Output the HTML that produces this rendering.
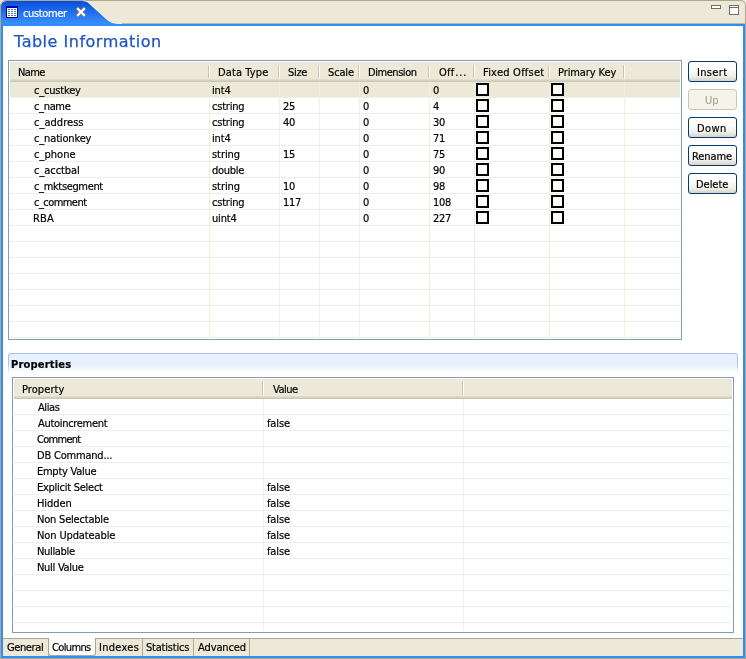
<!DOCTYPE html>
<html><head><meta charset="utf-8">
<style>
html,body{margin:0;padding:0;}
body{width:746px;height:659px;overflow:hidden;background:#ece9d8;font-family:"DejaVu Sans Condensed","Liberation Sans",sans-serif;font-size:11px;color:#000;position:relative;}
div,span{position:absolute;white-space:nowrap;box-sizing:border-box;}
#frame{left:1px;top:24px;width:744px;height:634px;border:2px solid #2f8cfd;background:#fff;}
#title{font-family:"DejaVu Sans","Liberation Sans",sans-serif;font-size:16px;line-height:20px;color:#1e56c3;-webkit-text-stroke:0.25px #1e56c3;}
.tb{border:1px solid #7f9db9;background:#fff;}
.hd{height:20px;background:linear-gradient(#ece9d8 0,#ece9d8 17px,#e2decd 17px,#e2decd 18px,#d6d2c2 18px,#d6d2c2 19px,#cbc7b8 19px,#cbc7b8 20px);}
.hs{width:2px;height:13px;border-left:1px solid #c7c5b2;border-right:1px solid #fff;}
.t{line-height:13px;height:13px;}
span{will-change:transform;-webkit-text-stroke:0.2px;}
.hl{height:1px;background:#f1efe2;}
.vl{width:1px;background:#f1efe2;}
.cb{width:13px;height:13px;border:2px solid #000;background:#fff;}
.btn{left:688px;width:49px;height:21px;border:1px solid #003c74;border-radius:3px;background:linear-gradient(#fff 0,#fcfcfa 40%,#f0efe8 75%,#d8d2c6 100%);}
.btn.dis{border-color:#c9c7ba;background:#f5f4ea;}
.dis span{color:#aca899;}
</style></head><body>
<svg style="position:absolute;left:0;top:0" width="746" height="659" viewBox="0 0 746 659">
<defs><linearGradient id="tg" x1="0" y1="0" x2="0" y2="1"><stop offset="0" stop-color="#084edc"/><stop offset="0.5" stop-color="#2272f2"/><stop offset="1" stop-color="#3d94ff"/></linearGradient></defs>
<path d="M0.5 659 V6 Q0.5 0.5 6 0.5 H740 Q745.5 0.5 745.5 6 V659" fill="#ece9d8" stroke="#b0a78e"/>
<path d="M0 658.5H746" stroke="#b0a78e"/>
<path d="M1 26 V7 Q1 1 7 1 H82 C87 1 88.5 3 91 5.5 L106.5 19.5 C110 22.5 114 24 121 24 H745 V26 Z" fill="url(#tg)"/>
<path d="M83 0.8 C88 0.8 89.5 2.8 92 5.3 L107.5 19.3 C111 22.3 115 23.5 122 23.5 H743" fill="none" stroke="#f6f4ea" stroke-width="1" opacity="0.7"/>
<path d="M122 23.5H745" stroke="#c4b898"/>
<rect x="6" y="6" width="12" height="12" fill="#000080"/>
<rect x="7" y="6" width="10" height="2" fill="#0000c8"/>
<rect x="7" y="8" width="10" height="9" fill="#fff"/>
<rect x="8" y="9" width="2" height="1" fill="#4878a8"/><rect x="11" y="9" width="2" height="1" fill="#4878a8"/><rect x="14" y="9" width="2" height="1" fill="#4878a8"/><rect x="8" y="11" width="2" height="1" fill="#4878a8"/><rect x="11" y="11" width="2" height="1" fill="#4878a8"/><rect x="14" y="11" width="2" height="1" fill="#4878a8"/><rect x="8" y="13" width="2" height="1" fill="#4878a8"/><rect x="11" y="13" width="2" height="1" fill="#4878a8"/><rect x="14" y="13" width="2" height="1" fill="#4878a8"/><rect x="8" y="15" width="2" height="1" fill="#4878a8"/><rect x="11" y="15" width="2" height="1" fill="#4878a8"/><rect x="14" y="15" width="2" height="1" fill="#4878a8"/>
<path d="M78 9 L84 15 M84 9 L78 15" stroke="#8a8268" stroke-width="3.4" stroke-linecap="square"/>
<path d="M78 9 L84 15 M84 9 L78 15" stroke="#fff" stroke-width="2" stroke-linecap="square"/>
<rect x="711.5" y="5.5" width="9" height="3" fill="#fff" stroke="#716f64"/>
<rect x="729.5" y="5.5" width="9" height="9" fill="#fff" stroke="#716f64"/>
<path d="M730 7.5H738" stroke="#716f64"/>
</svg>
<div id="frame"></div>

<span class="t" style="left:23.0px;top:7px;letter-spacing:-0.35px;color:#fff;">customer</span>
<span class="" style="left:13.5px;top:32px;letter-spacing:0.51px;" id="title">Table Information</span>
<div class="tb" style="left:8px;top:60px;width:674px;height:280px"></div>
<div class="hd" style="left:10px;top:62px;width:670px"></div>
<div style="left:10px;top:82px;width:670px;height:15px;background:#ece9d8"></div>
<div class="hl" style="left:10px;top:97px;width:670px"></div>
<div class="hl" style="left:10px;top:113px;width:670px"></div>
<div class="hl" style="left:10px;top:129px;width:670px"></div>
<div class="hl" style="left:10px;top:145px;width:670px"></div>
<div class="hl" style="left:10px;top:161px;width:670px"></div>
<div class="hl" style="left:10px;top:177px;width:670px"></div>
<div class="hl" style="left:10px;top:193px;width:670px"></div>
<div class="hl" style="left:10px;top:209px;width:670px"></div>
<div class="hl" style="left:10px;top:225px;width:670px"></div>
<div class="hl" style="left:10px;top:241px;width:670px"></div>
<div class="hl" style="left:10px;top:257px;width:670px"></div>
<div class="hl" style="left:10px;top:273px;width:670px"></div>
<div class="hl" style="left:10px;top:289px;width:670px"></div>
<div class="hl" style="left:10px;top:305px;width:670px"></div>
<div class="hl" style="left:10px;top:321px;width:670px"></div>
<div class="hl" style="left:10px;top:337px;width:670px"></div>
<div class="vl" style="left:209px;top:82px;height:256px"></div>
<div class="hs" style="left:208px;top:65px"></div>
<div class="vl" style="left:279px;top:82px;height:256px"></div>
<div class="hs" style="left:278px;top:65px"></div>
<div class="vl" style="left:319px;top:82px;height:256px"></div>
<div class="hs" style="left:318px;top:65px"></div>
<div class="vl" style="left:359px;top:82px;height:256px"></div>
<div class="hs" style="left:358px;top:65px"></div>
<div class="vl" style="left:429px;top:82px;height:256px"></div>
<div class="hs" style="left:428px;top:65px"></div>
<div class="vl" style="left:474px;top:82px;height:256px"></div>
<div class="hs" style="left:473px;top:65px"></div>
<div class="vl" style="left:549px;top:82px;height:256px"></div>
<div class="hs" style="left:548px;top:65px"></div>
<div class="vl" style="left:624px;top:82px;height:256px"></div>
<div class="hs" style="left:623px;top:65px"></div>
<span class="t" style="left:18.0px;top:66px;letter-spacing:-0.6px;">Name</span>
<span class="t" style="left:218.0px;top:66px;letter-spacing:0.12px;">Data Type</span>
<span class="t" style="left:288.0px;top:66px;letter-spacing:-0.3px;">Size</span>
<span class="t" style="left:327.5px;top:66px;letter-spacing:-0.15px;">Scale</span>
<span class="t" style="left:368.0px;top:66px;letter-spacing:-0.45px;">Dimension</span>
<span class="t" style="left:438.5px;top:66px;letter-spacing:0.3px;">Off<i style="font-style:normal;letter-spacing:0.85px;margin-left:0.6px">...</i></span>
<span class="t" style="left:482.5px;top:66px;letter-spacing:0.24px;">Fixed Offset</span>
<span class="t" style="left:557.5px;top:66px;letter-spacing:-0.1px;">Primary Key</span>
<span class="t" style="left:33.5px;top:84px;letter-spacing:-0.19px;">c_custkey</span>
<span class="t" style="left:211.5px;top:84px;letter-spacing:-0.17px;">int4</span>
<span class="t" style="left:363px;top:84px;">0</span>
<span class="t" style="left:433px;top:84px;">0</span>
<div class="cb" style="left:476px;top:83px"></div>
<div class="cb" style="left:551px;top:83px"></div>
<span class="t" style="left:33.5px;top:100px;letter-spacing:-0.34px;">c_name</span>
<span class="t" style="left:211.5px;top:100px;letter-spacing:-0.22px;">cstring</span>
<span class="t" style="left:283px;top:100px;letter-spacing:-0.35px;">25</span>
<span class="t" style="left:363px;top:100px;">0</span>
<span class="t" style="left:433px;top:100px;">4</span>
<div class="cb" style="left:476px;top:99px"></div>
<div class="cb" style="left:551px;top:99px"></div>
<span class="t" style="left:33.5px;top:116px;letter-spacing:0.03px;">c_address</span>
<span class="t" style="left:211.5px;top:116px;letter-spacing:-0.22px;">cstring</span>
<span class="t" style="left:283px;top:116px;letter-spacing:-0.35px;">40</span>
<span class="t" style="left:363px;top:116px;">0</span>
<span class="t" style="left:433px;top:116px;letter-spacing:-0.35px;">30</span>
<div class="cb" style="left:476px;top:115px"></div>
<div class="cb" style="left:551px;top:115px"></div>
<span class="t" style="left:33.5px;top:132px;letter-spacing:-0.15px;">c_nationkey</span>
<span class="t" style="left:211.5px;top:132px;letter-spacing:-0.17px;">int4</span>
<span class="t" style="left:363px;top:132px;">0</span>
<span class="t" style="left:433px;top:132px;letter-spacing:-0.35px;">71</span>
<div class="cb" style="left:476px;top:131px"></div>
<div class="cb" style="left:551px;top:131px"></div>
<span class="t" style="left:33.5px;top:148px;letter-spacing:0.03px;">c_phone</span>
<span class="t" style="left:211.5px;top:148px;letter-spacing:-0.06px;">string</span>
<span class="t" style="left:283px;top:148px;letter-spacing:-0.35px;">15</span>
<span class="t" style="left:363px;top:148px;">0</span>
<span class="t" style="left:433px;top:148px;letter-spacing:-0.35px;">75</span>
<div class="cb" style="left:476px;top:147px"></div>
<div class="cb" style="left:551px;top:147px"></div>
<span class="t" style="left:33.5px;top:164px;letter-spacing:-0.06px;">c_acctbal</span>
<span class="t" style="left:211.5px;top:164px;letter-spacing:-0.27px;">double</span>
<span class="t" style="left:363px;top:164px;">0</span>
<span class="t" style="left:433px;top:164px;letter-spacing:-0.35px;">90</span>
<div class="cb" style="left:476px;top:163px"></div>
<div class="cb" style="left:551px;top:163px"></div>
<span class="t" style="left:33.5px;top:180px;letter-spacing:-0.35px;">c_mktsegment</span>
<span class="t" style="left:211.5px;top:180px;letter-spacing:-0.06px;">string</span>
<span class="t" style="left:283px;top:180px;letter-spacing:-0.35px;">10</span>
<span class="t" style="left:363px;top:180px;">0</span>
<span class="t" style="left:433px;top:180px;letter-spacing:-0.35px;">98</span>
<div class="cb" style="left:476px;top:179px"></div>
<div class="cb" style="left:551px;top:179px"></div>
<span class="t" style="left:33.5px;top:196px;letter-spacing:-0.55px;">c_comment</span>
<span class="t" style="left:211.5px;top:196px;letter-spacing:-0.22px;">cstring</span>
<span class="t" style="left:283px;top:196px;letter-spacing:-0.35px;">117</span>
<span class="t" style="left:363px;top:196px;">0</span>
<span class="t" style="left:433px;top:196px;letter-spacing:-0.35px;">108</span>
<div class="cb" style="left:476px;top:195px"></div>
<div class="cb" style="left:551px;top:195px"></div>
<span class="t" style="left:33.0px;top:212px;letter-spacing:0.15px;">RBA</span>
<span class="t" style="left:211.5px;top:212px;letter-spacing:-0.19px;">uint4</span>
<span class="t" style="left:363px;top:212px;">0</span>
<span class="t" style="left:433px;top:212px;letter-spacing:-0.35px;">227</span>
<div class="cb" style="left:476px;top:211px"></div>
<div class="cb" style="left:551px;top:211px"></div>
<div class="btn" style="top:61px"></div>
<span class="t" style="left:696.5px;top:66px;letter-spacing:0.34px;">Insert</span>
<div class="btn dis" style="top:89px"></div>
<span class="t" style="left:705.0px;top:94px;letter-spacing:0.1px;color:#aca899;">Up</span>
<div class="btn" style="top:117px"></div>
<span class="t" style="left:697.0px;top:122px;letter-spacing:0.37px;">Down</span>
<div class="btn" style="top:145px"></div>
<span class="t" style="left:691.5px;top:150px;letter-spacing:-0.1px;">Rename</span>
<div class="btn" style="top:173px"></div>
<span class="t" style="left:695.5px;top:178px;letter-spacing:-0.04px;">Delete</span>
<div style="left:8px;top:353px;width:730px;height:21px;border-radius:3px 3px 0 0;background:linear-gradient(#a9c2f0 0,#a9c2f0 50%,#fff 100%)"></div>
<div style="left:9px;top:354px;width:728px;height:20px;border-radius:2px 2px 0 0;background:linear-gradient(#e8f1ff 0,#e8f1ff 52%,#fff 95%)"></div>
<span class="t" style="left:10.5px;top:358px;letter-spacing:0.19px;font-weight:bold;">Properties</span>
<div class="tb" style="left:12px;top:377px;width:722px;height:256px"></div>
<div class="hd" style="left:14px;top:379px;width:718px"></div>
<div class="hl" style="left:14px;top:414px;width:718px"></div>
<div class="hl" style="left:14px;top:430px;width:718px"></div>
<div class="hl" style="left:14px;top:446px;width:718px"></div>
<div class="hl" style="left:14px;top:462px;width:718px"></div>
<div class="hl" style="left:14px;top:478px;width:718px"></div>
<div class="hl" style="left:14px;top:494px;width:718px"></div>
<div class="hl" style="left:14px;top:510px;width:718px"></div>
<div class="hl" style="left:14px;top:526px;width:718px"></div>
<div class="hl" style="left:14px;top:542px;width:718px"></div>
<div class="hl" style="left:14px;top:558px;width:718px"></div>
<div class="hl" style="left:14px;top:574px;width:718px"></div>
<div class="hl" style="left:14px;top:590px;width:718px"></div>
<div class="hl" style="left:14px;top:606px;width:718px"></div>
<div class="hl" style="left:14px;top:622px;width:718px"></div>
<div class="vl" style="left:263px;top:399px;height:232px"></div>
<div class="hs" style="left:262px;top:382px"></div>
<div class="vl" style="left:463px;top:399px;height:232px"></div>
<div class="hs" style="left:462px;top:382px"></div>
<span class="t" style="left:22.0px;top:383px;letter-spacing:0.07px;">Property</span>
<span class="t" style="left:273.0px;top:383px;letter-spacing:-0.47px;">Value</span>
<span class="t" style="left:37.5px;top:401px;letter-spacing:-0.4px;">Alias</span>
<span class="t" style="left:37.5px;top:417px;letter-spacing:-0.31px;">Autoincrement</span>
<span class="t" style="left:266.5px;top:417px;letter-spacing:-0.12px;">false</span>
<span class="t" style="left:36.5px;top:433px;letter-spacing:-0.71px;">Comment</span>
<span class="t" style="left:36.5px;top:449px;letter-spacing:-0.2px;">DB Command...</span>
<span class="t" style="left:36.5px;top:465px;letter-spacing:-0.26px;">Empty Value</span>
<span class="t" style="left:36.5px;top:481px;letter-spacing:-0.26px;">Explicit Select</span>
<span class="t" style="left:266.5px;top:481px;letter-spacing:-0.12px;">false</span>
<span class="t" style="left:36.5px;top:497px;letter-spacing:-0.08px;">Hidden</span>
<span class="t" style="left:266.5px;top:497px;letter-spacing:-0.12px;">false</span>
<span class="t" style="left:36.5px;top:513px;letter-spacing:-0.2px;">Non Selectable</span>
<span class="t" style="left:266.5px;top:513px;letter-spacing:-0.12px;">false</span>
<span class="t" style="left:36.5px;top:529px;letter-spacing:-0.12px;">Non Updateable</span>
<span class="t" style="left:266.5px;top:529px;letter-spacing:-0.12px;">false</span>
<span class="t" style="left:36.5px;top:545px;letter-spacing:-0.34px;">Nullable</span>
<span class="t" style="left:266.5px;top:545px;letter-spacing:-0.12px;">false</span>
<span class="t" style="left:36.5px;top:561px;letter-spacing:-0.28px;">Null Value</span>
<div style="left:3px;top:638px;width:740px;height:18px;background:#ece9d8;border-top:1px solid #aca899"></div>
<div style="left:48px;top:639px;width:1px;height:17px;background:#aca899"></div>
<span class="t" style="left:6.5px;top:641px;letter-spacing:-0.39px;">General</span>
<div style="left:48px;top:638px;width:48px;height:18px;background:#fff;border:1px solid #aca899;border-top:none;border-radius:0 0 3px 3px"></div>
<span class="t" style="left:51.5px;top:641px;letter-spacing:-0.63px;">Columns</span>
<div style="left:142px;top:639px;width:1px;height:17px;background:#aca899"></div>
<span class="t" style="left:98.5px;top:641px;letter-spacing:0.28px;">Indexes</span>
<div style="left:193px;top:639px;width:1px;height:17px;background:#aca899"></div>
<span class="t" style="left:146.0px;top:641px;letter-spacing:-0.21px;">Statistics</span>
<div style="left:249px;top:639px;width:1px;height:17px;background:#aca899"></div>
<span class="t" style="left:198.0px;top:641px;letter-spacing:-0.11px;">Advanced</span>
</body></html>
